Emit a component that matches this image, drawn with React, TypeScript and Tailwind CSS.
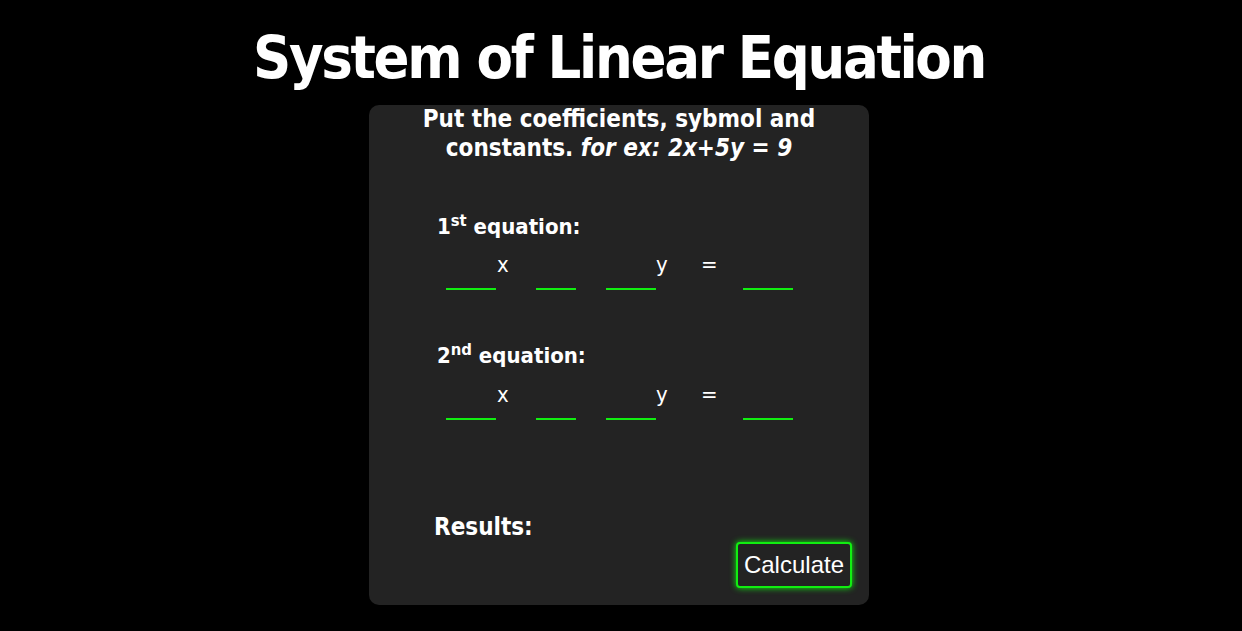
import React from 'react'

const font = { fontFamily: '"DejaVu Sans Condensed", "DejaVu Sans", sans-serif' }

function Blank({ w }: { w: string }) {
  return (
    <input
      type="text"
      className={`${w} h-[38px] bg-transparent border-b-2 border-[#11ee11] text-white text-[22px] outline-none px-1`}
    />
  )
}

function EquationRow() {
  return (
    <div className="flex items-start text-white text-[22px] leading-[26px] ml-[77px]">
      <Blank w="w-[50px]" />
      <span className="ml-[1px] w-[13px]">x</span>
      <span className="ml-[26px]"><Blank w="w-[40px]" /></span>
      <span className="ml-[30px]"><Blank w="w-[50px]" /></span>
      <span className="w-[14px]">y</span>
      <span className="ml-[31px] w-[18px]">=</span>
      <span className="ml-[24px]"><Blank w="w-[50px]" /></span>
    </div>
  )
}

export default function App() {
  return (
    <div className="min-h-screen bg-black flex flex-col items-center pr-[4px] font-stretch-condensed" style={font}>
      <h1 className="mt-[28px] text-white font-bold text-[59px] leading-none tracking-[-2.3px]">
        System of Linear Equation
      </h1>

      <div className="mt-[18px] w-[500px] h-[500px] bg-[#232323] rounded-[10px] flex flex-col">
        <p className="px-[40px] text-center text-white font-bold text-[24px] leading-[29px]">
          Put the coefficients, sybmol and constants. <i>for ex: 2x+5y = 9</i>
        </p>

        <div className="mt-[51px] ml-[68px] text-white font-bold text-[22px] leading-[26px]">
          1<sup>st</sup> equation:
        </div>
        <div className="mt-[12px]">
          <EquationRow />
        </div>

        <div className="mt-[53px] ml-[68px] text-white font-bold text-[22px] leading-[26px]">
          2<sup>nd</sup> equation:
        </div>
        <div className="mt-[13px]">
          <EquationRow />
        </div>

        <div className="mt-[94px] ml-[65px] text-white font-bold text-[24px] leading-[26px]">Results:</div>

        <button
          className="mt-[2px] mr-[17px] self-end px-[6px] py-[7px] border-2 border-[#11ee11] rounded-[4px] bg-[#232323] text-white text-[24px] leading-[28px] shadow-[0_0_6px_#11ee11]"
          style={{ fontFamily: '"Liberation Sans", Arial, sans-serif' }}
        >
          Calculate
        </button>
      </div>
    </div>
  )
}
